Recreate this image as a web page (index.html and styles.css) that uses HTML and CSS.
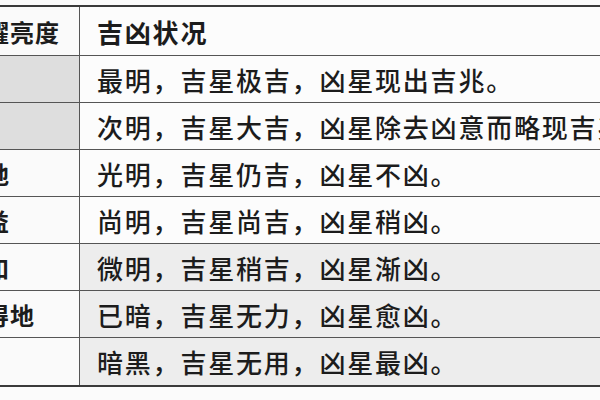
FILE: index.html
```html
<!DOCTYPE html>
<html lang="zh">
<head>
<meta charset="utf-8">
<link rel="stylesheet" href="styles.css">
</head>
<body>
<div class="table">
  <div class="cell left head">星曜亮度</div>
  <div class="cell right head">吉凶状况</div>

  <div class="cell left gray">庙</div>
  <div class="cell right">最明，吉星极吉，凶星现出吉兆。</div>

  <div class="cell left gray faint">旺</div>
  <div class="cell right">次明，吉星大吉，凶星除去凶意而略现吉兆。</div>

  <div class="cell left">得地</div>
  <div class="cell right">光明，吉星仍吉，凶星不凶。</div>

  <div class="cell left">利益</div>
  <div class="cell right">尚明，吉星尚吉，凶星稍凶。</div>

  <div class="cell left">平和</div>
  <div class="cell right tint">微明，吉星稍吉，凶星渐凶。</div>

  <div class="cell left">不得地</div>
  <div class="cell right tint">已暗，吉星无力，凶星愈凶。</div>

  <div class="cell left last">陷</div>
  <div class="cell right tint last">暗黑，吉星无用，凶星最凶。</div>
</div>
</body>
</html>
```

FILE: styles.css
```css
html, body {
  margin: 0;
  padding: 0;
  background: #fbfbfb;
  overflow: hidden;
  width: 600px;
  height: 400px;
}

.table {
  display: grid;
  grid-template-columns: 120px 700px;
  grid-template-rows: 49px repeat(7, 47px);
  margin-top: 5px;
  margin-left: -40px;
  width: 820px;
  border-top: 2px solid #3a3a3a;
  border-bottom: 2px solid #3a3a3a;
  font-family: "Noto Sans CJK SC", "Noto Sans", sans-serif;
  color: #1c1c1c;
}

.cell {
  display: flex;
  align-items: center;
  border-bottom: 1px solid #555;
  white-space: nowrap;
  overflow: hidden;
  box-sizing: border-box;
}

.cell.last {
  border-bottom: none;
}

.left {
  border-right: 1px solid #555;
  font-size: 24px;
  letter-spacing: 1px;
  font-weight: 700;
  padding-left: 0;
  background: #fafafa;
}

.left.gray {
  background: #dedede;
}

.left.faint {
  color: #cfcfcf;
}

.right {
  font-size: 26px;
  letter-spacing: 1.8px;
  font-weight: 500;
  padding-left: 17px;
  background: #fcfcfc;
}

.right.head {
  font-weight: 700;
}

.right.tint {
  background: #ededed;
}
```
